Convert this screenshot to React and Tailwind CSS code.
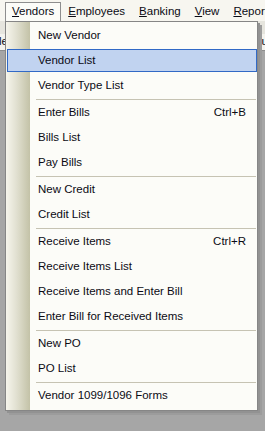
import React from 'react'

const menuBar = [
    { key: 'V', rest: 'endors', open: true },
    { key: 'E', rest: 'mployees' },
    { key: 'B', rest: 'anking' },
    { key: 'V', rest: 'iew' },
    { key: 'R', rest: 'eports' },
]

// null = separator
const items = [
    { label: 'New Vendor' },
    { label: 'Vendor List', active: true },
    { label: 'Vendor Type List' },
    null,
    { label: 'Enter Bills', shortcut: 'Ctrl+B' },
    { label: 'Bills List' },
    { label: 'Pay Bills' },
    null,
    { label: 'New Credit' },
    { label: 'Credit List' },
    null,
    { label: 'Receive Items', shortcut: 'Ctrl+R' },
    { label: 'Receive Items List' },
    { label: 'Receive Items and Enter Bill' },
    { label: 'Enter Bill for Received Items' },
    null,
    { label: 'New PO' },
    { label: 'PO List' },
    null,
    { label: 'Vendor 1099/1096 Forms' },
]

const MenuItem = ({ label, shortcut, active }) => {
    return (
        <div className='h-[25px] flex items-center'>
            <div className={`h-[23px] w-full ml-[1px] flex items-center justify-between pl-[30px] pr-[10px] border ${active ? 'border-[#3169c6] bg-[#c1d3f0]' : 'border-transparent'}`}>
                <span>{label}</span>
                {shortcut && <span>{shortcut}</span>}
            </div>
        </div>
    )
}

const App = () => {
    return (
        <div className="relative w-[265px] h-[431px] overflow-hidden bg-[#a6a6a6] text-[11.5px] text-[#0b0b14] font-['Liberation_Sans',Arial,sans-serif] leading-none">
            <div className='h-[21px] bg-[#f7f6f0] flex items-stretch pl-[5px] pt-[2px] whitespace-nowrap'>
                {menuBar.map((m, i) => (
                    <div key={i} className={`flex items-center px-[6px] border border-b-0 ${m.open ? 'border-[#8e8e8e] bg-[#fcfcf8]' : 'border-transparent'}`}>
                        <span><u>{m.key}</u>{m.rest}</span>
                    </div>
                ))}
            </div>

            {/* toolbar strip partly hidden behind the open menu */}
            <div className='h-[13px] bg-[#e6e5de]'></div>
            <div className='h-[17px] bg-[#f4f3ee] border-b border-[#8d8d8d] flex items-center justify-between overflow-hidden whitespace-nowrap'>
                <span className='-ml-[1px]'>le</span>
                <span className='-mr-[3px]'>cu</span>
            </div>

            <div className='absolute left-[5px] top-[21px] w-[253px] border border-[#868686] py-[1px] pb-[2px] bg-[linear-gradient(to_right,#f6f5ec_0px,#e2e1d2_10px,#c3c2a7_24px,#fcfcf8_24px)] shadow-[2px_2px_0_#929292,4px_4px_0_#9c9c9c]'>
                {items.map((it, i) => it
                    ? <MenuItem key={i} {...it} />
                    : <div key={i} className='h-[2px] pt-[1px] ml-[30px] mr-[1px]'><div className='h-[1px] bg-[#c6c3b3]'></div></div>
                )}
            </div>
        </div>
    )
}

export default App
